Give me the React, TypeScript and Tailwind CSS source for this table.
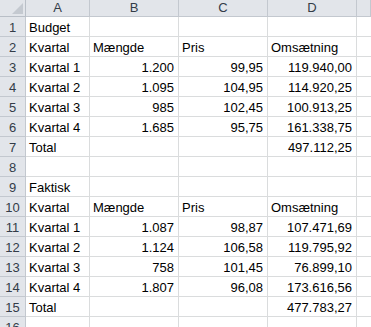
import React from "react";

const cols = ["A", "B", "C", "D", ""];
type Row = [string, string, string, string];
const rows: Row[] = [
  ["Budget", "", "", ""],
  ["Kvartal", "Mængde", "Pris", "Omsætning"],
  ["Kvartal 1", "1.200", "99,95", "119.940,00"],
  ["Kvartal 2", "1.095", "104,95", "114.920,25"],
  ["Kvartal 3", "985", "102,45", "100.913,25"],
  ["Kvartal 4", "1.685", "95,75", "161.338,75"],
  ["Total", "", "", "497.112,25"],
  ["", "", "", ""],
  ["Faktisk", "", "", ""],
  ["Kvartal", "Mængde", "Pris", "Omsætning"],
  ["Kvartal 1", "1.087", "98,87", "107.471,69"],
  ["Kvartal 2", "1.124", "106,58", "119.795,92"],
  ["Kvartal 3", "758", "101,45", "76.899,10"],
  ["Kvartal 4", "1.807", "96,08", "173.616,56"],
  ["Total", "", "", "477.783,27"],
  ["", "", "", ""],
];

const isNum = (s: string) => /^[0-9.,]+$/.test(s);

export default function App() {
  return (
    <div
      className="w-[371px] h-[327px] overflow-hidden bg-white text-black"
      style={{ fontFamily: '"Liberation Sans", Arial, sans-serif' }}
    >
      <div className="grid grid-cols-[26px_64px_89px_89px_89px_1fr] auto-rows-[20px] grid-rows-[17px] text-[13px]">
        {/* header */}
        <div className="relative bg-[#e2e5ea] border-r border-b border-[#b9bfc7]">
          <div className="absolute right-[2px] bottom-[2px] w-0 h-0 border-l-[11px] border-l-transparent border-b-[11px] border-b-[#c4c9d0]" />
        </div>
        {cols.map((c, i) => (
          <div
            key={i}
            className="bg-[#e2e5ea] border-r border-b border-[#c3c8cf] flex items-end justify-center leading-[15px] pb-[1px] text-[#333c48]"
          >
            {c}
          </div>
        ))}
        {rows.map((r, ri) => (
          <React.Fragment key={ri}>
            <div className="bg-[#e2e5ea] border-r border-b border-[#c3c8cf] flex items-end justify-center leading-[15px] pb-[1px] text-[#333c48]">
              {ri + 1}
            </div>
            {r.map((v, ci) => (
              <div
                key={ci}
                className={
                  "border-r border-b border-[#dadcdd] flex items-end leading-[15px] pb-[1px] whitespace-nowrap " +
                  (isNum(v) ? "justify-end pr-[4px]" : "justify-start pl-[3px]")
                }
              >
                {v}
              </div>
            ))}
            <div className="border-b border-[#dadcdd]" />
          </React.Fragment>
        ))}
      </div>
    </div>
  );
}
